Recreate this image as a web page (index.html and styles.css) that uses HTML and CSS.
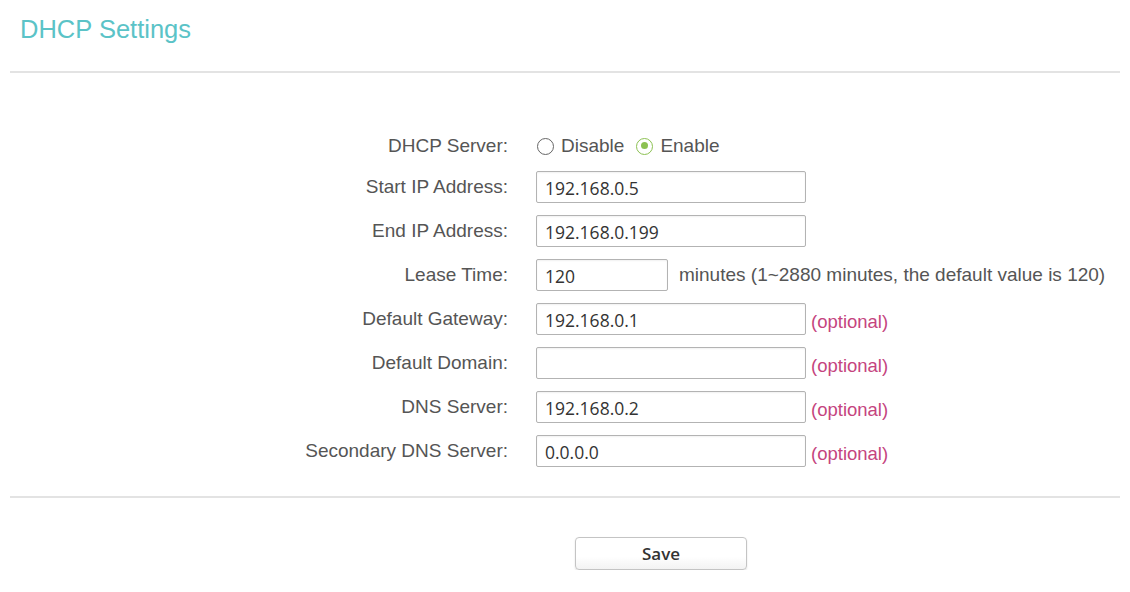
FILE: index.html
```html
<!DOCTYPE html>
<html lang="en">
<head>
    <meta charset="UTF-8">
    <meta name="viewport" content="width=device-width, initial-scale=1.0">
    <title>DHCP Settings</title>
    <link rel="stylesheet" href="styles.css">
</head>
<body>
    <div class="page">
        <div class="head">
            <h1>DHCP Settings</h1>
        </div>
        <form class="form" onsubmit="return false;">
            <div class="row radio-row">
                <label class="label">DHCP Server:</label>
                <div class="field">
                    <span class="radio"></span><span class="radio-text">Disable</span>
                    <span class="radio checked"></span><span class="radio-text">Enable</span>
                </div>
            </div>
            <div class="row">
                <label class="label">Start IP Address:</label>
                <div class="field"><input class="box" type="text" value="192.168.0.5"></div>
            </div>
            <div class="row">
                <label class="label">End IP Address:</label>
                <div class="field"><input class="box" type="text" value="192.168.0.199"></div>
            </div>
            <div class="row">
                <label class="label">Lease Time:</label>
                <div class="field">
                    <input class="box short" type="text" value="120">
                    <span class="hint">minutes (1~2880 minutes, the default value is 120)</span>
                </div>
            </div>
            <div class="row">
                <label class="label">Default Gateway:</label>
                <div class="field">
                    <input class="box" type="text" value="192.168.0.1">
                    <span class="optional">(optional)</span>
                </div>
            </div>
            <div class="row">
                <label class="label">Default Domain:</label>
                <div class="field">
                    <input class="box" type="text" value="">
                    <span class="optional">(optional)</span>
                </div>
            </div>
            <div class="row">
                <label class="label">DNS Server:</label>
                <div class="field">
                    <input class="box" type="text" value="192.168.0.2">
                    <span class="optional">(optional)</span>
                </div>
            </div>
            <div class="row">
                <label class="label">Secondary DNS Server:</label>
                <div class="field">
                    <input class="box" type="text" value="0.0.0.0">
                    <span class="optional">(optional)</span>
                </div>
            </div>
        </form>
        <div class="foot">
            <button class="save" type="button">Save</button>
        </div>
    </div>
</body>
</html>
```

FILE: styles.css
```css
body {
    margin: 0;
    background: #fff;
    font-family: 'Liberation Sans', Arial, sans-serif;
    color: #555;
}
.page {
    padding: 0 10px;
}
.head {
    padding: 14px 0 0 10px;
    height: 57px;
    border-bottom: 2px solid #e3e3e3;
}
h1 {
    margin: 0;
    font-size: 25.5px;
    font-weight: normal;
    line-height: 30px;
    color: #5bc3c7;
}
.form {
    display: flex;
    flex-direction: column;
    gap: 12px;
    padding: 60px 0 29px;
    border-bottom: 2px solid #e3e3e3;
}
.row {
    display: flex;
    align-items: center;
    height: 32px;
}
.radio-row {
    height: 26px;
}
.label {
    width: 498px;
    margin-right: 28px;
    text-align: right;
    font-size: 19px;
    color: #555;
}
.field {
    display: flex;
    align-items: center;
    height: 100%;
    font-size: 19px;
}
.radio {
    box-sizing: border-box;
    width: 17px;
    height: 17px;
    border: 1.6px solid #666;
    border-radius: 50%;
    margin: 0 7px 0 1px;
    position: relative;
}
.radio.checked {
    border-color: #8cc152;
    margin-left: 12px;
}
.radio.checked::after {
    content: '';
    position: absolute;
    left: 3.5px;
    top: 3.5px;
    width: 7px;
    height: 7px;
    border-radius: 50%;
    background: #8cc152;
}
.radio-text {
    color: #555;
}
.box {
    box-sizing: border-box;
    width: 270px;
    height: 32px;
    margin: 0;
    padding: 2px 8px 0;
    border: 1px solid #b3b3b3;
    border-radius: 2px;
    box-shadow: inset 0 1px 2px rgba(0, 0, 0, 0.06);
    font-family: 'Open Sans', sans-serif;
    font-size: 17.5px;
    color: #333;
    outline: none;
}
.box.short {
    width: 132px;
}
.hint {
    margin-left: 11px;
    color: #555;
}
.optional {
    margin: 6px 0 0 5px;
    font-size: 18.5px;
    color: #c5447e;
}
.foot {
    padding: 39px 0 0 565px;
}
.save {
    width: 172px;
    height: 33px;
    border: 1px solid #c4c4c4;
    border-radius: 4px;
    background: linear-gradient(#fff 60%, #f3f3f3);
    box-shadow: 0 1px 2px rgba(0, 0, 0, 0.12);
    font-family: 'Open Sans', sans-serif;
    font-size: 17px;
    font-weight: 600;
    color: #333;
    cursor: pointer;
}
```
